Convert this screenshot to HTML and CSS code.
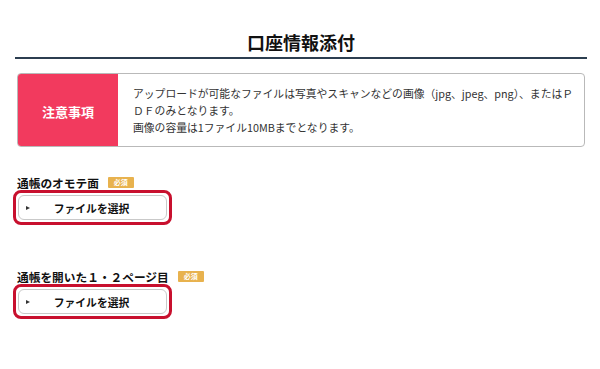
FILE: index.html
```html
<!DOCTYPE html>
<html lang="ja">
<head>
<meta charset="utf-8">
<link rel="stylesheet" href="styles.css">
</head>
<body>
<div class="page">
  <h1 class="title">口座情報添付</h1>
  <div class="notice">
    <div class="notice-head">注意事項</div>
    <div class="notice-body">
      <p class="nline">アップロードが可能なファイルは写真やスキャンなどの画像（jpg、jpeg、png）、またはＰ</p>
      <p class="nline">ＤＦのみとなります。</p>
      <p class="nline">画像の容量は1ファイル10MBまでとなります。</p>
    </div>
  </div>
  <div class="field first">
    <div class="label-row"><span class="label">通帳のオモテ面</span><span class="badge">必須</span></div>
    <div class="highlight">
      <div class="file-btn"><span class="arrow"></span><span class="btn-text">ファイルを選択</span></div>
    </div>
  </div>
  <div class="field second">
    <div class="label-row"><span class="label">通帳を開いた１・２ページ目</span><span class="badge">必須</span></div>
    <div class="highlight">
      <div class="file-btn"><span class="arrow"></span><span class="btn-text">ファイルを選択</span></div>
    </div>
  </div>
</div>
</body>
</html>
```
FILE: styles.css
```css
* { box-sizing: border-box; }
html, body { margin: 0; padding: 0; background: #fff; }
body {
  font-family: "Noto Sans CJK JP", "Noto Sans", sans-serif;
  color: #222;
}
.page {
  width: 600px;
  padding: 0 15px 0 17px;
}
.title {
  margin: 0 -2px 0 -2px;
  padding: 30px 0 3px;
  line-height: 24px;
  font-size: 18px;
  font-weight: 700;
  text-align: center;
  color: #111;
  border-bottom: 2px solid #2c3e50;
}
.notice {
  margin-top: 14px;
  height: 74px;
  display: flex;
  border: 1px solid #b9b9b9;
  border-radius: 4px;
  overflow: hidden;
}
.notice-head {
  width: 100px;
  flex: none;
  background: #f23a5e;
  color: #fff;
  font-weight: 700;
  font-size: 13px;
  display: flex;
  align-items: center;
  justify-content: center;
  padding-top: 2px;
}
.notice-body {
  flex: 1;
  padding: 0 0 0 15px;
  display: flex;
  flex-direction: column;
  justify-content: center;
}
.nline {
  margin: 0;
  font-size: 10.8px;
  line-height: 17px;
  color: #333;
  white-space: nowrap;
}
.field.first { margin-top: 28px; }
.field.second { margin-top: 44px; }
.label-row {
  display: flex;
  align-items: center;
  height: 15px;
}
.label {
  font-size: 11.7px;
  font-weight: 700;
  color: #111;
  line-height: 15px;
}
.badge {
  margin-left: 9px;
  width: 26px;
  height: 11px;
  background: #e8b24e;
  color: #fff;
  font-size: 7px;
  line-height: 11px;
  text-align: center;
  border-radius: 1px;
  font-weight: 700;
}
.highlight {
  margin-left: -4px;
  width: 159px;
  height: 35px;
  border: 3px solid #c8102e;
  border-radius: 8px;
  padding: 2px;
}
.file-btn {
  height: 25px;
  border: 1px solid #c9c9c9;
  border-radius: 6px;
  background: #fff;
  display: flex;
  align-items: center;
  position: relative;
}
.arrow {
  position: absolute;
  left: 7px;
  top: 10px;
  width: 0;
  height: 0;
  border-top: 2.5px solid transparent;
  border-bottom: 2.5px solid transparent;
  border-left: 4px solid #333;
}
.btn-text {
  flex: 1;
  text-align: center;
  font-size: 10.8px;
  font-weight: 700;
  color: #111;
  padding-right: 2px;
}
```
